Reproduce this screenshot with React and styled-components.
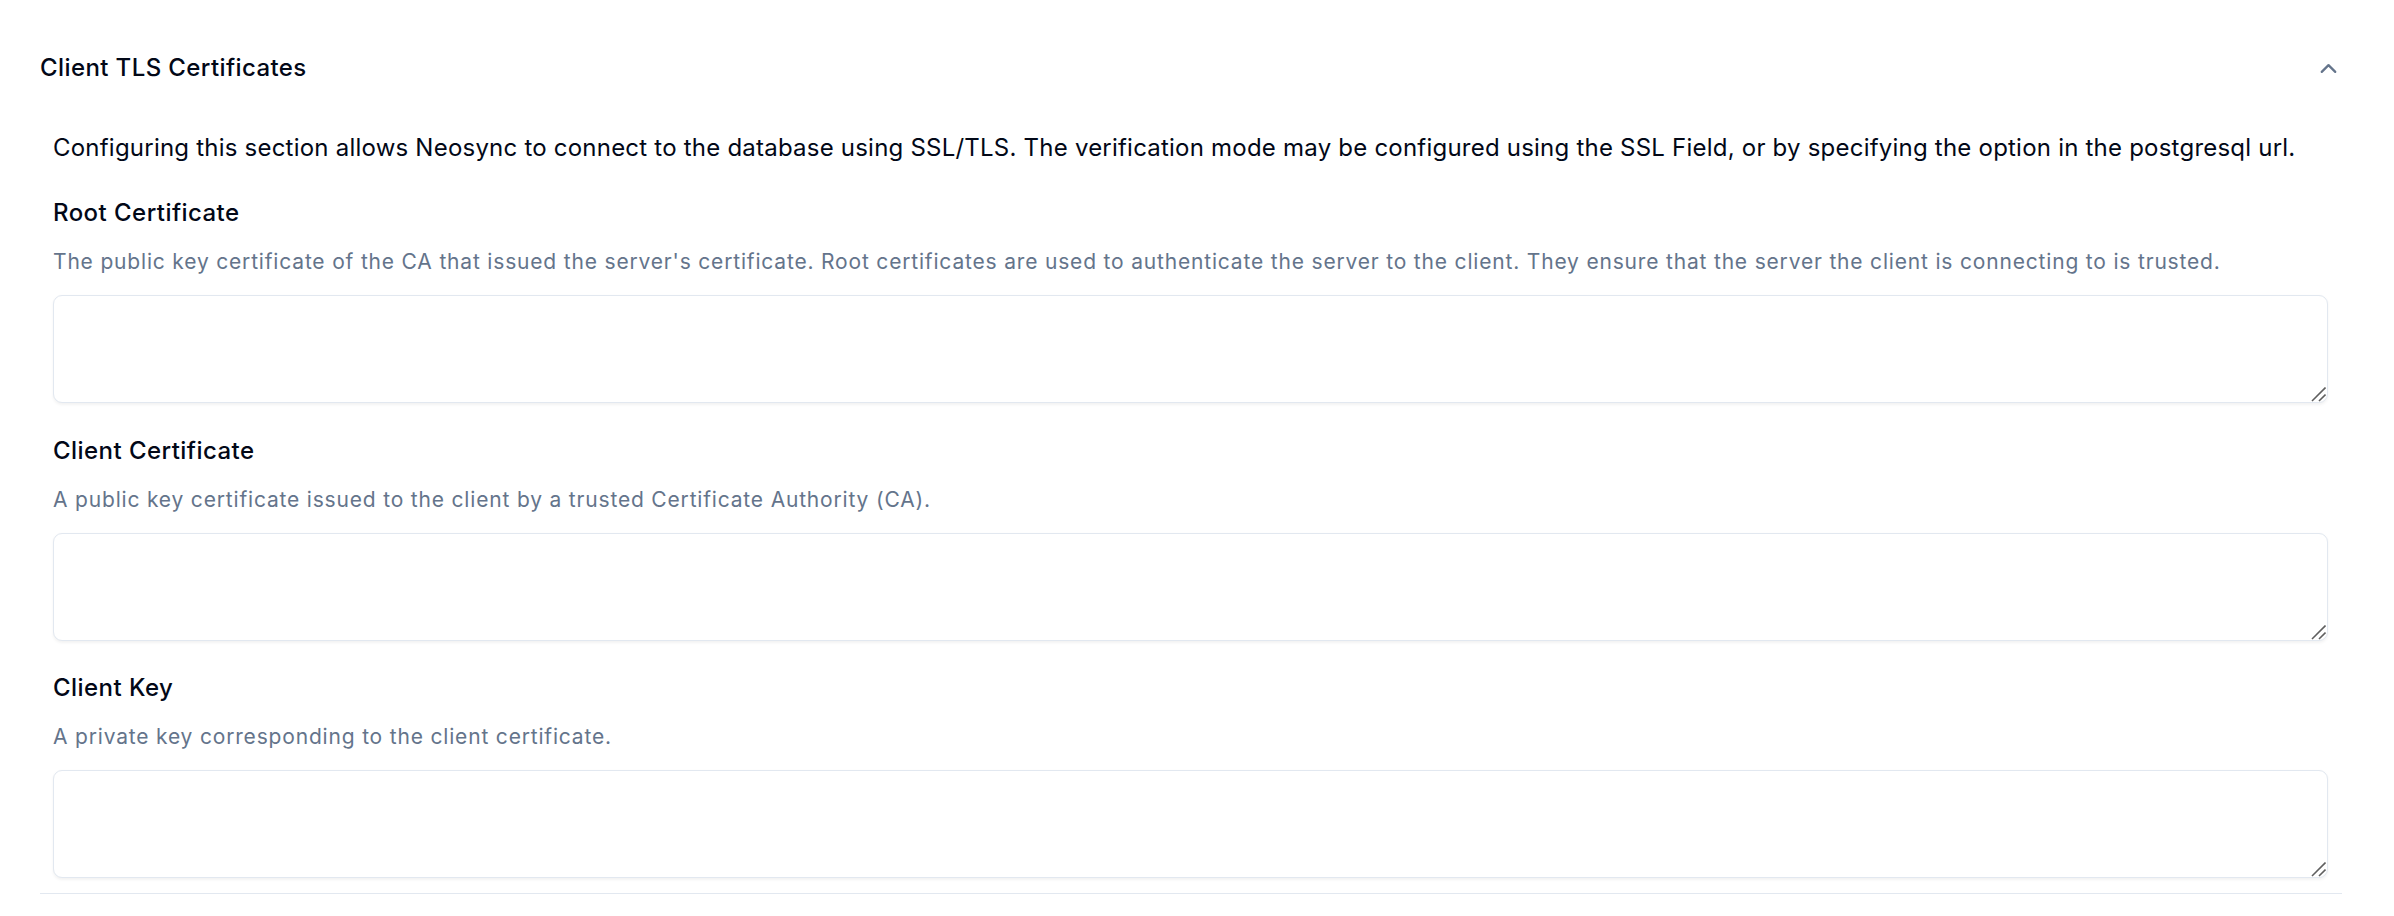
import React from "react";
import styled, { createGlobalStyle } from "styled-components";
import { ChevronUp } from "lucide-react";

const GlobalStyle = createGlobalStyle`
  html, body {
    margin: 0;
    padding: 0;
    background: #ffffff;
  }
  body {
    font-family: Inter, "Noto Sans", "Liberation Sans", sans-serif;
    color: #020817;
  }
  * { box-sizing: border-box; }
`;

const Page = styled.div`
  padding: 24px 52px 0 40px;
`;

const AccordionItem = styled.section`
  border-bottom: 1.5px solid #e2e8f0;
`;

const Trigger = styled.button`
  width: 100%;
  display: flex;
  align-items: center;
  justify-content: space-between;
  padding: 26px 0 24px 0;
  margin: 0;
  border: none;
  background: transparent;
  cursor: pointer;
  font: inherit;
  text-align: left;
`;

const Title = styled.span`
  font-size: 24px;
  line-height: 36px;
  font-weight: 500;
  letter-spacing: 0.4px;
  color: #020817;
`;

const Chevron = styled(ChevronUp)`
  flex: none;
  color: #64748b;
`;

const Content = styled.div`
  display: flex;
  flex-direction: column;
  gap: 29.5px;
  padding: 19.5px 14px 14.5px 13px;
`;

const Intro = styled.p`
  margin: 0;
  font-size: 24px;
  line-height: 36px;
  letter-spacing: 0.22px;
  color: #020817;
`;

const Field = styled.div`
  display: flex;
  flex-direction: column;
  gap: 15px;
`;

const Label = styled.label`
  font-size: 24px;
  line-height: 36px;
  font-weight: 500;
  letter-spacing: 0.45px;
  color: #020817;
`;

const Description = styled.p`
  margin: 0;
  font-size: 21px;
  line-height: 32px;
  letter-spacing: 0.82px;
  color: #64748b;
`;

const AreaWrap = styled.div`
  position: relative;
  margin-top: 2px;
`;

const TextArea = styled.textarea`
  display: block;
  width: 100%;
  height: 108px;
  padding: 12px 18px;
  border: 1.5px solid #e2e8f0;
  border-radius: 9px;
  background: #ffffff;
  box-shadow: 0 1.5px 3px rgba(0, 0, 0, 0.05);
  font-family: inherit;
  font-size: 21px;
  color: #020817;
  resize: none;
  outline: none;
`;

const Grip = styled.svg`
  position: absolute;
  right: 2px;
  bottom: 1px;
  width: 15px;
  height: 15px;
  pointer-events: none;
`;

const ResizeGrip = () => (
  <Grip viewBox="0 0 15 15" aria-hidden="true">
    <line x1="1" y1="14" x2="14.5" y2="0.5" stroke="#5f5f5f" strokeWidth="1.6" />
    <line x1="8" y1="14" x2="14.5" y2="7.5" stroke="#5f5f5f" strokeWidth="1.6" />
  </Grip>
);

const fields = [
  {
    id: "root",
    label: "Root Certificate",
    description:
      "The public key certificate of the CA that issued the server's certificate. Root certificates are used to authenticate the server to the client. They ensure that the server the client is connecting to is trusted.",
  },
  {
    id: "clientCert",
    label: "Client Certificate",
    description:
      "A public key certificate issued to the client by a trusted Certificate Authority (CA).",
  },
  {
    id: "clientKey",
    label: "Client Key",
    description: "A private key corresponding to the client certificate.",
  },
];

export default function App() {
  return (
    <>
      <GlobalStyle />
      <Page>
        <AccordionItem>
          <Trigger type="button">
            <Title>Client TLS Certificates</Title>
            <Chevron size={27} strokeWidth={2} />
          </Trigger>
          <Content>
            <Intro>
              Configuring this section allows Neosync to connect to the database
              using SSL/TLS. The verification mode may be configured using the SSL
              Field, or by specifying the option in the postgresql url.
            </Intro>
            {fields.map((f) => (
              <Field key={f.id}>
                <Label htmlFor={f.id}>{f.label}</Label>
                <Description>{f.description}</Description>
                <AreaWrap>
                  <TextArea id={f.id} />
                  <ResizeGrip />
                </AreaWrap>
              </Field>
            ))}
          </Content>
        </AccordionItem>
      </Page>
    </>
  );
}
